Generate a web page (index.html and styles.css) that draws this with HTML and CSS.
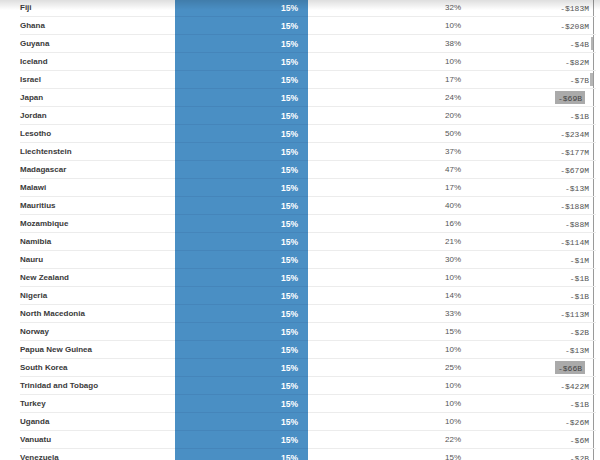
FILE: index.html
```html
<!DOCTYPE html>
<html>
<head>
<meta charset="utf-8">
<link rel="stylesheet" href="styles.css">
</head>
<body>
<div class="shade"></div>
<div class="table">
  <div class="row"><div class="c">Fiji</div><div class="b">15%</div><div class="r">32%</div><div class="a"><span class="v">-$183M</span><span class="ax"></span></div></div>
  <div class="row"><div class="c">Ghana</div><div class="b">15%</div><div class="r">10%</div><div class="a"><span class="v">-$208M</span><span class="ax"></span></div></div>
  <div class="row"><div class="c">Guyana</div><div class="b">15%</div><div class="r">38%</div><div class="a"><span class="v">-$4B</span><span class="ax"><i class="bar" style="width:2px"></i></span></div></div>
  <div class="row"><div class="c">Iceland</div><div class="b">15%</div><div class="r">10%</div><div class="a"><span class="v">-$82M</span><span class="ax"></span></div></div>
  <div class="row"><div class="c">Israel</div><div class="b">15%</div><div class="r">17%</div><div class="a"><span class="v">-$7B</span><span class="ax"><i class="bar" style="width:3px"></i></span></div></div>
  <div class="row"><div class="c">Japan</div><div class="b">15%</div><div class="r">24%</div><div class="a"><span class="v hl">-$69B</span><span class="ax wide"></span></div></div>
  <div class="row"><div class="c">Jordan</div><div class="b">15%</div><div class="r">20%</div><div class="a"><span class="v">-$1B</span><span class="ax"></span></div></div>
  <div class="row"><div class="c">Lesotho</div><div class="b">15%</div><div class="r">50%</div><div class="a"><span class="v">-$234M</span><span class="ax"></span></div></div>
  <div class="row"><div class="c">Liechtenstein</div><div class="b">15%</div><div class="r">37%</div><div class="a"><span class="v">-$177M</span><span class="ax"></span></div></div>
  <div class="row"><div class="c">Madagascar</div><div class="b">15%</div><div class="r">47%</div><div class="a"><span class="v">-$679M</span><span class="ax"></span></div></div>
  <div class="row"><div class="c">Malawi</div><div class="b">15%</div><div class="r">17%</div><div class="a"><span class="v">-$13M</span><span class="ax"></span></div></div>
  <div class="row"><div class="c">Mauritius</div><div class="b">15%</div><div class="r">40%</div><div class="a"><span class="v">-$188M</span><span class="ax"></span></div></div>
  <div class="row"><div class="c">Mozambique</div><div class="b">15%</div><div class="r">16%</div><div class="a"><span class="v">-$88M</span><span class="ax"></span></div></div>
  <div class="row"><div class="c">Namibia</div><div class="b">15%</div><div class="r">21%</div><div class="a"><span class="v">-$114M</span><span class="ax"></span></div></div>
  <div class="row"><div class="c">Nauru</div><div class="b">15%</div><div class="r">30%</div><div class="a"><span class="v">-$1M</span><span class="ax"></span></div></div>
  <div class="row"><div class="c">New Zealand</div><div class="b">15%</div><div class="r">10%</div><div class="a"><span class="v">-$1B</span><span class="ax"></span></div></div>
  <div class="row"><div class="c">Nigeria</div><div class="b">15%</div><div class="r">14%</div><div class="a"><span class="v">-$1B</span><span class="ax"></span></div></div>
  <div class="row"><div class="c">North Macedonia</div><div class="b">15%</div><div class="r">33%</div><div class="a"><span class="v">-$113M</span><span class="ax"></span></div></div>
  <div class="row"><div class="c">Norway</div><div class="b">15%</div><div class="r">15%</div><div class="a"><span class="v">-$2B</span><span class="ax"></span></div></div>
  <div class="row"><div class="c">Papua New Guinea</div><div class="b">15%</div><div class="r">10%</div><div class="a"><span class="v">-$13M</span><span class="ax"></span></div></div>
  <div class="row"><div class="c">South Korea</div><div class="b">15%</div><div class="r">25%</div><div class="a"><span class="v hl">-$66B</span><span class="ax wide"></span></div></div>
  <div class="row"><div class="c">Trinidad and Tobago</div><div class="b">15%</div><div class="r">10%</div><div class="a"><span class="v">-$422M</span><span class="ax"></span></div></div>
  <div class="row"><div class="c">Turkey</div><div class="b">15%</div><div class="r">10%</div><div class="a"><span class="v">-$1B</span><span class="ax"></span></div></div>
  <div class="row"><div class="c">Uganda</div><div class="b">15%</div><div class="r">10%</div><div class="a"><span class="v">-$26M</span><span class="ax"></span></div></div>
  <div class="row"><div class="c">Vanuatu</div><div class="b">15%</div><div class="r">22%</div><div class="a"><span class="v">-$6M</span><span class="ax"></span></div></div>
  <div class="row"><div class="c">Venezuela</div><div class="b">15%</div><div class="r">15%</div><div class="a"><span class="v">-$2B</span><span class="ax"></span></div></div>
</div>
</body>
</html>
```

FILE: styles.css
```css
html, body {
  margin: 0;
  padding: 0;
  background: #fff;
  overflow: hidden;
}
body {
  width: 600px;
  height: 460px;
  position: relative;
  font-family: "Liberation Sans", Arial, sans-serif;
}
.shade {
  position: absolute;
  left: 0;
  top: 0;
  width: 600px;
  height: 10px;
  background: linear-gradient(to bottom, rgba(0,0,0,0.13), rgba(0,0,0,0));
  z-index: 2;
  pointer-events: none;
}
.table {
  margin-top: -1px;
  padding-left: 20px;
  width: 576px;
}
.row {
  display: grid;
  grid-template-columns: 155px 133px 153px 135px;
  height: 18px;
}
.row > div {
  border-bottom: 1px solid #ececec;
  display: flex;
  align-items: center;
  box-sizing: border-box;
  height: 18px;
}
.c {
  font-size: 8px;
  font-weight: bold;
  color: #3a3a3a;
}
.b {
  background: #4a8fc4;
  justify-content: flex-end;
  padding-right: 10px;
  color: #fff;
  font-size: 8.5px;
  font-weight: bold;
  border-bottom-color: #4585ba !important;
}
.r {
  justify-content: flex-end;
  font-size: 8px;
  color: #555;
}
.a {
  justify-content: flex-end;
  align-items: stretch !important;
  font-family: "Liberation Mono", "Courier New", monospace;
  font-size: 8px;
  color: #555;
}
.v {
  display: flex;
  align-items: center;
  margin: 2px 0;
  padding-top: 1px;
}
.v.hl {
  background: #aaaaaa;
  color: #444;
  padding: 1px 3px 0 3px;
}
.ax {
  width: 4px;
  border-right: 1px solid #9a9a9a;
  margin-right: 2px;
  display: flex;
  justify-content: flex-end;
  align-items: center;
}
.ax.wide {
  width: 8px;
}
.bar {
  display: block;
  height: 13px;
  background: #b5b5b5;
}
```
